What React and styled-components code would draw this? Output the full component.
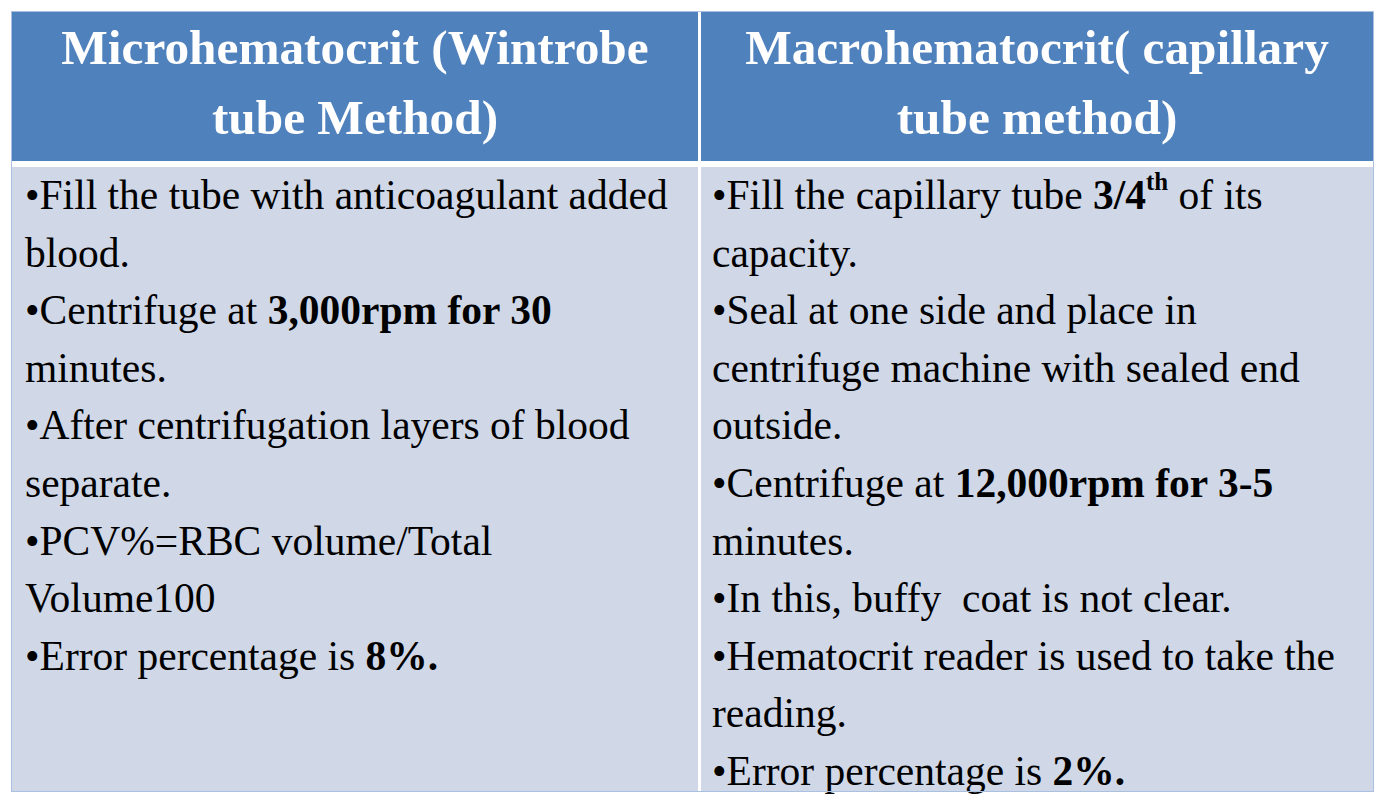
import React from "react";
import styled, { createGlobalStyle } from "styled-components";

const Global = createGlobalStyle`
  html, body { margin: 0; padding: 0; background: #ffffff; }
`;

const serif = `"Liberation Serif", "Times New Roman", Times, "DejaVu Serif", serif`;

const Page = styled.div`
  width: 1386px;
  height: 805px;
  box-sizing: border-box;
  padding: 12px 13px 14px 12px;
  background: #ffffff;
  font-family: ${serif};
`;

const Table = styled.div`
  display: grid;
  grid-template-columns: 686px 672px;
  grid-template-rows: 149px 624px;
  column-gap: 3px;
  row-gap: 6px;
  width: 1361px;
  background: #ffffff;
  outline: 1px solid #a9c0e0;
`;

const HeadCell = styled.div`
  background: #4f81bd;
  color: #ffffff;
  font-family: ${serif};
  font-weight: bold;
  font-size: 49.3px;
  line-height: 70px;
  text-align: center;
  padding-top: 1px;
  box-sizing: border-box;
`;

const BodyCell = styled.div`
  background: #d0d8e8;
  color: #000000;
  font-family: ${serif};
  font-size: 41.5px;
  line-height: 57.6px;
  padding: 0 0 0 ${(p) => p.$pad}px;
  box-sizing: border-box;
  white-space: nowrap;
`;

const Para = styled.div``;

const B = styled.b`
  font-weight: bold;
`;

const Sup = styled.sup`
  font-size: 0.6em;
  line-height: 0;
  vertical-align: 0.75em;
  font-weight: bold;
`;

export default function App() {
  return (
    <Page>
      <Global />
      <Table>
        <HeadCell>
          Microhematocrit (Wintrobe
          <br />
          tube Method)
        </HeadCell>
        <HeadCell>
          Macrohematocrit( capillary
          <br />
          tube method)
        </HeadCell>
        <BodyCell $pad={13}>
          <Para>
            •Fill the tube with anticoagulant added
            <br />
            blood.
          </Para>
          <Para>
            •Centrifuge at <B>3,000rpm for 30</B>
            <br />
            minutes.
          </Para>
          <Para>
            •After centrifugation layers of blood
            <br />
            separate.
          </Para>
          <Para>
            •PCV%=RBC volume/Total
            <br />
            Volume100
          </Para>
          <Para>
            •Error percentage is <B>8%.</B>
          </Para>
        </BodyCell>
        <BodyCell $pad={11}>
          <Para>
            •Fill the capillary tube{" "}
            <B>
              3/4<Sup>th</Sup>
            </B>{" "}
            of its
            <br />
            capacity.
          </Para>
          <Para>
            •Seal at one side and place in
            <br />
            centrifuge machine with sealed end
            <br />
            outside.
          </Para>
          <Para>
            •Centrifuge at <B>12,000rpm for 3-5</B>
            <br />
            minutes.
          </Para>
          <Para>•In this, buffy&nbsp; coat is not clear.</Para>
          <Para>
            •Hematocrit reader is used to take the
            <br />
            reading.
          </Para>
          <Para>
            •Error percentage is <B>2%.</B>
          </Para>
        </BodyCell>
      </Table>
    </Page>
  );
}
